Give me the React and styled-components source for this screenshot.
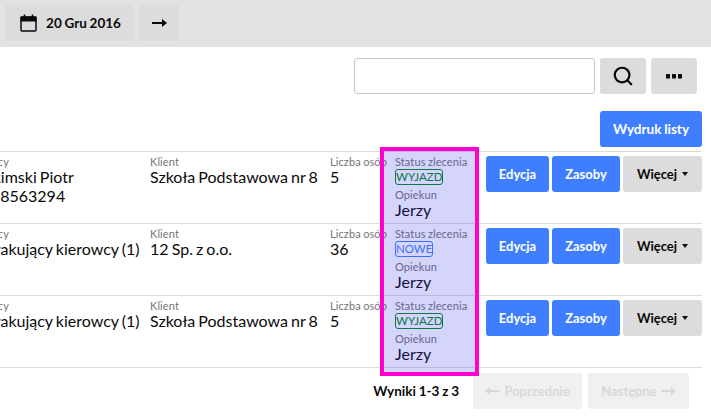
import React from 'react';
import styled, { createGlobalStyle } from 'styled-components';
import { Search } from 'lucide-react';

const Global = createGlobalStyle`
  html, body { margin: 0; padding: 0; background: #fff; }
  body { font-family: Lato, "Liberation Sans", sans-serif; color: #0a0a0a; }
`;

const Page = styled.div`
  position: relative;
  width: 711px;
  height: 419px;
  overflow: hidden;
`;

const TopBar = styled.div`
  height: 47px;
  box-sizing: border-box;
  background: #e2e2e2;
  display: flex;
  gap: 5px;
  padding: 5px;
`;

const BarButton = styled.button`
  width: ${p => p.$w}px;
  height: 36px;
  border: 0;
  border-radius: 3px;
  background: #dcdcdc;
  font: 700 13.5px Lato, sans-serif;
  word-spacing: -0.5px;
  color: #0a0a0a;
  display: flex;
  align-items: center;
  justify-content: center;
  gap: 9px;
  padding: 0 0 0 ${p => p.$indent || 0}px;
`;

const SearchRow = styled.div`
  display: flex;
  justify-content: flex-end;
  gap: 5px;
  padding: 11px 14px 0 0;
`;

const SearchInput = styled.input`
  width: 241px;
  height: 36px;
  box-sizing: border-box;
  border: 1px solid #c8c8c8;
  border-radius: 3px;
`;

const IconButton = styled.button`
  width: 46px;
  height: 36px;
  border: 0;
  border-radius: 3px;
  background: #dcdcdc;
  display: flex;
  align-items: center;
  justify-content: center;
  padding: 0;
`;

const PrintRow = styled.div`
  display: flex;
  justify-content: flex-end;
  padding: 17px 9px 4px 0;
`;

const Button = styled.button`
  height: 36px;
  width: ${p => p.$w}px;
  border: 0;
  border-radius: 3px;
  padding: 0;
  background: ${p => (p.$grey ? '#dcdcdc' : '#3f7fff')};
  color: ${p => (p.$grey ? '#0a0a0a' : '#fff')};
  font: 700 ${p => p.$size || 13}px Lato, sans-serif;
  word-spacing: -0.5px;
  display: flex;
  align-items: center;
  justify-content: center;
  gap: 5px;
`;

const Caret = styled.i`
  width: 0;
  height: 0;
  border: 3.5px solid transparent;
  border-top: 4px solid #0a0a0a;
  border-bottom: 0;
`;

const Table = styled.div`
  width: 702px;
  border-bottom: 1px solid #ddd;
`;

const Row = styled.div`
  height: 72px;
  box-sizing: border-box;
  border-top: 1px solid #ddd;
  display: flex;
`;

const Cell = styled.div`
  width: ${p => p.$w}px;
  flex: none;
  padding-top: 4px;
  white-space: nowrap;
`;

const DriverCell = styled(Cell)`
  margin-left: -40px;
`;

const Label = styled.div`
  font-size: 11px;
  line-height: 12px;
  letter-spacing: 0.1px;
  word-spacing: -0.5px;
  margin-bottom: -1px;
  color: #757575;
`;

const DriverLabel = styled(Label)`
  margin-left: 3px;
`;

const Value = styled.div`
  font-size: 16px;
  line-height: 19px;
  word-spacing: -1px;
`;

const Badge = styled.div`
  width: fit-content;
  margin-top: 2px;
  height: 14px;
  line-height: 14px;
  font-size: 11.5px;
  border-radius: 3px;
  border: 1px solid ${p => p.$color};
  color: ${p => p.$color};
`;

const StaffLabel = styled(Label)`
  margin-top: 4px;
`;

const StaffValue = styled(Value)`
  line-height: 18px;
  margin-top: 1px;
`;

const Actions = styled.div`
  display: flex;
  gap: 3px;
  padding-top: 4px;
`;

const Highlight = styled.div`
  position: absolute;
  left: 380px;
  top: 147px;
  width: 99px;
  height: 229px;
  box-sizing: border-box;
  border: 4px solid #ff00d0;
  background: rgba(43, 43, 240, 0.2);
`;

const Footer = styled.div`
  display: flex;
  justify-content: flex-end;
  align-items: center;
  padding: 5px 22px 0 0;
`;

const Total = styled.span`
  font-size: 13.5px;
  font-weight: 700;
  word-spacing: -0.5px;
  margin-right: 14px;
`;

const PageButton = styled.button`
  width: ${p => p.$w}px;
  height: 36px;
  margin-left: ${p => p.$gap || 0}px;
  border: 0;
  border-radius: 3px;
  padding: 0;
  background: #f0f0f0;
  color: #d8d8d8;
  font: 700 13px Lato, sans-serif;
  display: flex;
  align-items: center;
  justify-content: center;
  gap: 4px;
`;

const Calendar = () => (
  <svg width="17" height="18" viewBox="0 0 17 18" fill="none" stroke="#0a0a0a">
    <rect x="1" y="3" width="15" height="14" rx="1" strokeWidth="1.5" />
    <rect x="1" y="3" width="15" height="4" fill="#0a0a0a" strokeWidth="1" />
    <path d="M4.5 0.5v3M12.5 0.5v3" strokeWidth="1.6" />
  </svg>
);

const Arrow = ({ color = '#0a0a0a', flip, w = 15 }) => (
  <svg width={w} height="10" viewBox="0 0 15 10" style={flip ? { transform: 'scaleX(-1)' } : undefined}>
    <path d="M0 4h10V1l5 4-5 4V6H0z" fill={color} />
  </svg>
);

const Dots = () => (
  <svg width="16" height="5" viewBox="0 0 16 5" fill="#0a0a0a">
    <rect x="0" y="0" width="4" height="4.5" rx="0.5" />
    <rect x="6" y="0" width="4" height="4.5" rx="0.5" />
    <rect x="12" y="0" width="4" height="4.5" rx="0.5" />
  </svg>
);

const rows = [
  {
    driver: ['Burakimski Piotr', '48 678563294'],
    client: 'Szkoła Podstawowa nr 8',
    count: 5,
    status: 'WYJAZD',
    color: '#008c20',
  },
  {
    driver: ['Już brakujący kierowcy (1)'],
    client: '12 Sp. z o.o.',
    count: 36,
    status: 'NOWE',
    color: '#3f7fff',
  },
  {
    driver: ['Już brakujący kierowcy (1)'],
    client: 'Szkoła Podstawowa nr 8',
    count: 5,
    status: 'WYJAZD',
    color: '#008c20',
  },
];

export default function App() {
  return (
    <Page>
      <Global />
      <TopBar>
        <BarButton $w={129} $indent={2}>
          <Calendar />
          20 Gru 2016
        </BarButton>
        <BarButton $w={40}>
          <Arrow />
        </BarButton>
      </TopBar>
      <SearchRow>
        <SearchInput />
        <IconButton>
          <Search size={22} color="#0a0a0a" strokeWidth={2.4} />
        </IconButton>
        <IconButton>
          <Dots />
        </IconButton>
      </SearchRow>
      <PrintRow>
        <Button $w={102} $size={13.5}>Wydruk listy</Button>
      </PrintRow>
      <Table>
        {rows.map((r, i) => (
          <Row key={i}>
            <DriverCell $w={190}>
              <DriverLabel>Kierowcy</DriverLabel>
              {r.driver.map(line => (
                <Value key={line}>{line}</Value>
              ))}
            </DriverCell>
            <Cell $w={180}>
              <Label>Klient</Label>
              <Value>{r.client}</Value>
            </Cell>
            <Cell $w={65}>
              <Label>Liczba osób</Label>
              <Value>{r.count}</Value>
            </Cell>
            <Cell $w={91}>
              <Label>Status zlecenia</Label>
              <Badge $color={r.color}>{r.status}</Badge>
              <StaffLabel>Opiekun</StaffLabel>
              <StaffValue>Jerzy</StaffValue>
            </Cell>
            <Actions>
              <Button $w={63}>Edycja</Button>
              <Button $w={68}>Zasoby</Button>
              <Button $w={79} $grey>
                Więcej <Caret />
              </Button>
            </Actions>
          </Row>
        ))}
      </Table>
      <Highlight />
      <Footer>
        <Total>Wyniki 1-3 z 3</Total>
        <PageButton $w={109}>
          <Arrow color="#d8d8d8" flip />
          Poprzednie
        </PageButton>
        <PageButton $w={101} $gap={6}>
          Następne
          <Arrow color="#d8d8d8" />
        </PageButton>
      </Footer>
    </Page>
  );
}
